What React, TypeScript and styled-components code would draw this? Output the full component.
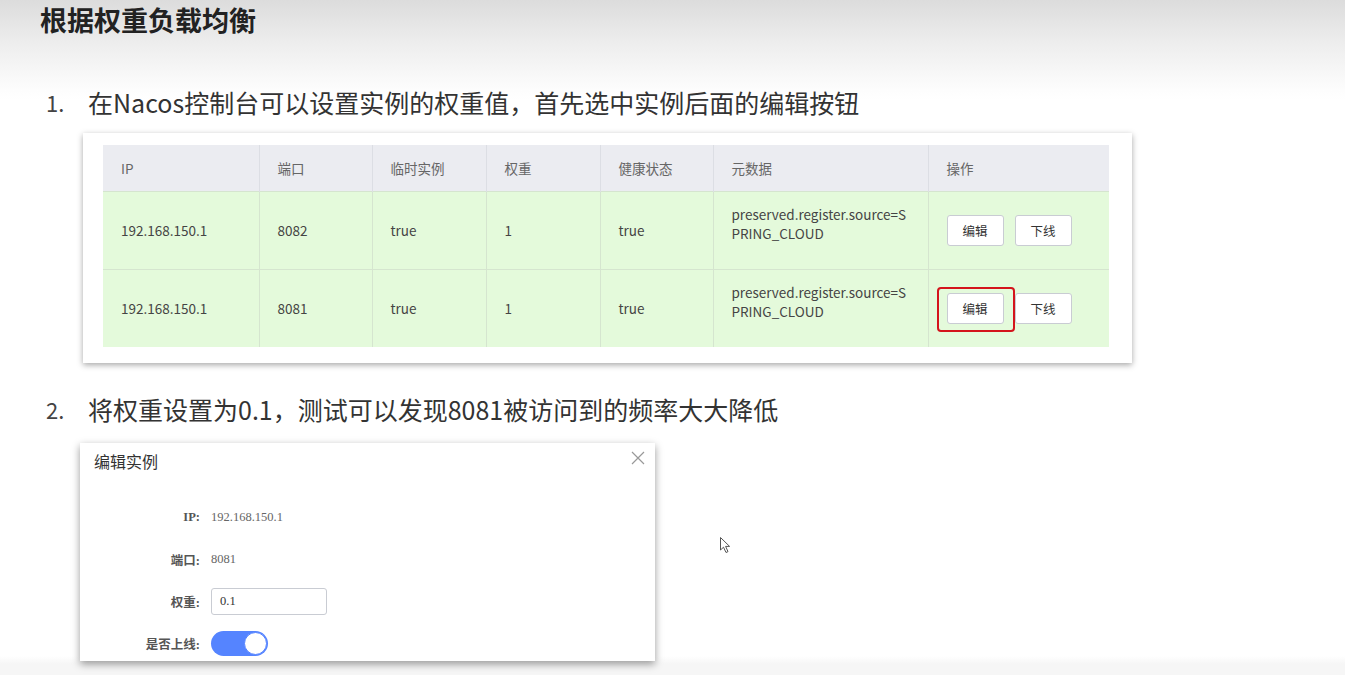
import styled, { createGlobalStyle } from 'styled-components';

const GlobalStyle = createGlobalStyle`
  html, body {
    margin: 0;
    padding: 0;
    background: #ffffff;
  }
  body {
    font-family: "Noto Sans CJK SC", "Noto Sans", sans-serif;
    color: #333;
  }
`;

const Page = styled.div`
  position: relative;
  width: 1345px;
  height: 675px;
  overflow: hidden;
  background: linear-gradient(
    to bottom,
    #dcdcdc 0px,
    #eeeeee 45px,
    #fdfdfd 90px,
    #ffffff 100px,
    #ffffff 656px,
    #f6f6f6 664px,
    #f6f6f6 675px
  );
`;

const Header = styled.header`
  padding: 2px 40px 0;
  height: 80px;
  box-sizing: border-box;
`;

const Title = styled.h1`
  margin: 0;
  font-size: 27px;
  line-height: 36px;
  font-weight: 700;
  color: #222;
`;

const Step = styled.div<{ $top: number }>`
  display: flex;
  padding-left: 46px;
  margin-top: ${(p) => p.$top}px;
  font-size: 25px;
  line-height: 34px;
  color: #333;
`;

const StepNum = styled.span`
  width: 42px;
  flex: none;
  font-size: 22px;
  color: #444;
`;

const Card = styled.div`
  margin: 14px 0 0 83px;
  width: 1049px;
  box-sizing: border-box;
  padding: 12px 23px 16px 20px;
  background: #fff;
  box-shadow: 0 2px 6px rgba(0, 0, 0, 0.35);
`;

const Table = styled.table`
  width: 1006px;
  border-collapse: collapse;
  table-layout: fixed;
  font-size: 13.5px;
`;

const Th = styled.th<{ $w: number }>`
  width: ${(p) => p.$w}px;
  height: 46px;
  box-sizing: border-box;
  padding: 0 0 0 18px;
  text-align: left;
  font-weight: 400;
  color: #666;
  background: #ebecf1;
  border-left: 1px solid #dcdee4;
  &:first-child {
    border-left: none;
  }
`;

const Td = styled.td<{ $raise?: boolean }>`
  height: 78px;
  box-sizing: border-box;
  padding: 0 0 ${(p) => (p.$raise ? 12 : 0)}px 18px;
  color: #444;
  background: #e4fadb;
  border-left: 1px solid #d5e5cf;
  border-top: 1px solid #d5e5cf;
  line-height: 19px;
  &:first-child {
    border-left: none;
  }
`;

const Actions = styled.div`
  display: flex;
  gap: 11px;
`;

const Button = styled.button<{ $marked?: boolean }>`
  position: relative;
  width: 57px;
  height: 31px;
  padding: 0;
  border: 1px solid #c9ccd3;
  border-radius: 3px;
  background: #fff;
  font-family: inherit;
  font-size: 12.5px;
  color: #333;
  ${(p) =>
    p.$marked &&
    `
    &::after {
      content: '';
      position: absolute;
      top: -7px;
      left: -11px;
      right: -12px;
      bottom: -9px;
      border: 2px solid #d4141c;
      border-radius: 4px;
    }
  `}
`;

const Dialog = styled.div`
  margin: 17px 0 0 80px;
  width: 575px;
  height: 218px;
  background: #fff;
  box-shadow: 0 3px 8px rgba(0, 0, 0, 0.4);
  overflow: hidden;
`;

const DialogHead = styled.div`
  position: relative;
  height: 36px;
  padding-left: 14px;
  display: flex;
  align-items: center;
  font-size: 16px;
  color: #333;
`;

const Close = styled.svg`
  position: absolute;
  top: 8px;
  right: 10px;
`;

const Form = styled.div`
  margin-top: 17px;
  display: grid;
  grid-template-columns: 120px 1fr;
  grid-auto-rows: 42px;
  column-gap: 11px;
  align-items: center;
  font-family: "Liberation Serif", "Noto Sans CJK SC", serif;
  font-size: 12.5px;
`;

const Label = styled.div`
  text-align: right;
  font-weight: 700;
  color: #555;
`;

const Value = styled.div`
  color: #666;
`;

const Input = styled.div`
  width: 116px;
  height: 27px;
  box-sizing: border-box;
  border: 1px solid #c9ccd3;
  border-radius: 3px;
  padding-left: 8px;
  display: flex;
  align-items: center;
  color: #333;
`;

const Switch = styled.div<{ $on: boolean }>`
  width: 57px;
  height: 25px;
  box-sizing: border-box;
  border-radius: 13px;
  background: ${(p) => (p.$on ? '#5584ff' : '#ccc')};
  display: flex;
  justify-content: ${(p) => (p.$on ? 'flex-end' : 'flex-start')};
  align-items: center;
  padding: 1px;
`;

const Knob = styled.span`
  width: 23px;
  height: 23px;
  box-sizing: border-box;
  border-radius: 50%;
  background: #fff;
  border: 1px solid #5584ff;
`;

const Cursor = styled.svg`
  position: absolute;
  left: 719px;
  top: 536px;
`;

const columns = [
  { name: 'IP', w: 156 },
  { name: '端口', w: 113 },
  { name: '临时实例', w: 114 },
  { name: '权重', w: 114 },
  { name: '健康状态', w: 113 },
  { name: '元数据', w: 215 },
  { name: '操作', w: 181 },
];

const rows = [
  { ip: '192.168.150.1', port: '8082', marked: false },
  { ip: '192.168.150.1', port: '8081', marked: true },
];

export default function App() {
  return (
    <Page>
      <GlobalStyle />
      <Header>
        <Title>根据权重负载均衡</Title>
      </Header>

      <Step $top={5}>
        <StepNum>1.</StepNum>
        <span>在Nacos控制台可以设置实例的权重值，首先选中实例后面的编辑按钮</span>
      </Step>

      <Card>
        <Table>
          <thead>
            <tr>
              {columns.map((c) => (
                <Th key={c.name} $w={c.w}>
                  {c.name}
                </Th>
              ))}
            </tr>
          </thead>
          <tbody>
            {rows.map((r) => (
              <tr key={r.port}>
                <Td>{r.ip}</Td>
                <Td>{r.port}</Td>
                <Td>true</Td>
                <Td>1</Td>
                <Td>true</Td>
                <Td $raise>
                  preserved.register.source=S
                  <br />
                  PRING_CLOUD
                </Td>
                <Td>
                  <Actions>
                    <Button $marked={r.marked}>编辑</Button>
                    <Button>下线</Button>
                  </Actions>
                </Td>
              </tr>
            ))}
          </tbody>
        </Table>
      </Card>

      <Step $top={29}>
        <StepNum>2.</StepNum>
        <span>将权重设置为0.1，测试可以发现8081被访问到的频率大大降低</span>
      </Step>

      <Dialog>
        <DialogHead>
          编辑实例
          <Close width="14" height="14" viewBox="0 0 14 14">
            <path d="M1 1 L13 13 M13 1 L1 13" stroke="#999" strokeWidth="1.2" fill="none" />
          </Close>
        </DialogHead>
        <Form>
          <Label>IP:</Label>
          <Value>192.168.150.1</Value>
          <Label>端口:</Label>
          <Value>8081</Value>
          <Label>权重:</Label>
          <Input>0.1</Input>
          <Label>是否上线:</Label>
          <Switch $on>
            <Knob />
          </Switch>
        </Form>
      </Dialog>

      <Cursor width="14" height="19" viewBox="0 0 14 19">
        <path
          d="M1.5 1.5 L1.5 14 L4.5 11.2 L7 16.5 L9 15.6 L6.6 10.4 L10.6 10.4 Z"
          fill="#fff"
          stroke="#555"
          strokeWidth="1"
          strokeLinejoin="round"
        />
      </Cursor>
    </Page>
  );
}
